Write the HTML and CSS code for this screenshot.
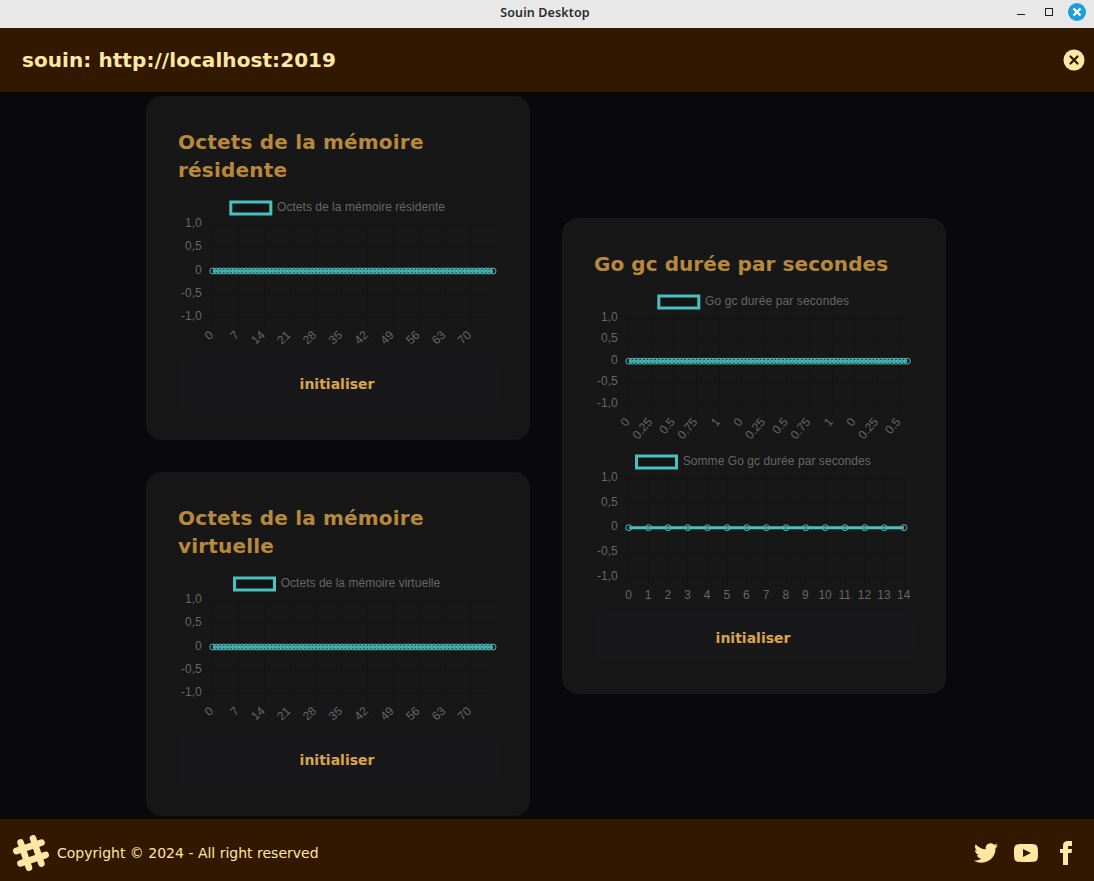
FILE: index.html
```html
<!DOCTYPE html>
<html lang="fr">
<head>
<meta charset="utf-8">
<title>Souin Desktop</title>
<link rel="stylesheet" href="styles.css">
</head>
<body>
<div class="window">
  <div class="titlebar">
    <span class="titlebar-text">Souin Desktop</span>
    <div class="controls">
      <svg width="80" height="28" viewBox="0 0 80 28">
        <path d="M3 14.5h8" stroke="#222" fill="none"/>
        <rect x="31.5" y="8.500" width="7" height="7" stroke="#222" fill="none"/>
        <circle cx="63" cy="12" r="9" fill="#1f9ede"/>
        <path d="M59.500 8.500l7 7m0-7l-7 7" stroke="#fff" stroke-width="2.300"/>
      </svg>
    </div>
  </div>
  <header class="header">
    <h1 class="header-title">souin: http://localhost:2019</h1>
    <svg class="close" width="22" height="22" viewBox="0 0 22 22">
      <circle cx="11" cy="11" r="10.500" fill="#ffe7a3"/>
      <path d="M7.500 7.500l7 7m0-7l-7 7" stroke="#331800" stroke-width="2.300" stroke-linecap="round"/>
    </svg>
  </header>
  <main class="main">
    <div class="column">
      <section class="card">
        <h2 class="card-title card-title-wide">Octets de la mémoire résidente</h2>
        <svg class="chart" data-chart="resident"></svg>
        <button class="button">initialiser</button>
      </section>
      <section class="card">
        <h2 class="card-title card-title-wide">Octets de la mémoire virtuelle</h2>
        <svg class="chart" data-chart="virtual"></svg>
        <button class="button">initialiser</button>
      </section>
    </div>
    <section class="card">
      <h2 class="card-title">Go gc durée par secondes</h2>
      <div class="charts">
        <svg class="chart" data-chart="gc"></svg>
        <svg class="chart" data-chart="sum"></svg>
      </div>
      <button class="button">initialiser</button>
    </section>
  </main>
  <footer class="footer">
    <div class="copyright">
      <svg width="36" height="36" viewBox="0 0 36 36">
        <g stroke="#ffe7a3" stroke-width="6.600" stroke-linecap="round" fill="none">
          <path d="M3.300 16L28.500 7.600M7.500 28.400L32.700 20M7.600 7.500L16 32.700M20 3.300L28.400 28.500"/>
        </g>
      </svg>
      <span>Copyright © 2024 - All right reserved</span>
    </div>
    <div class="socials">
      <svg width="24" height="24" viewBox="0 0 24 24"><path d="M24 4.557c-.883.392-1.832.656-2.828.775 1.017-.609 1.798-1.574 2.165-2.724-.951.564-2.005.974-3.127 1.195-.897-.957-2.178-1.555-3.594-1.555-3.179 0-5.515 2.966-4.797 6.045-4.091-.205-7.719-2.165-10.148-5.144-1.290 2.213-.669 5.108 1.523 6.574-.806-.026-1.566-.247-2.229-.616-.054 2.281 1.581 4.415 3.949 4.890-.693.188-1.452.232-2.224.084.626 1.956 2.444 3.379 4.600 3.419-2.070 1.623-4.678 2.348-7.290 2.040 2.179 1.397 4.768 2.212 7.548 2.212 9.142 0 14.307-7.721 13.995-14.646.962-.695 1.797-1.562 2.457-2.549z"/></svg>
      <svg width="24" height="24" viewBox="0 0 24 24"><path d="M19.615 3.184c-3.604-.246-11.631-.245-15.230 0-3.897.266-4.356 2.620-4.385 8.816.029 6.185.484 8.549 4.385 8.816 3.600.245 11.626.246 15.230 0 3.897-.266 4.356-2.620 4.385-8.816-.029-6.185-.484-8.549-4.385-8.816zm-10.615 12.816v-8l8 3.993-8 4.007z"/></svg>
      <svg width="24" height="24" viewBox="0 0 24 24"><path d="M9 8h-3v4h3v12h5v-12h3.642l.358-4h-4v-1.667c0-.955.192-1.333 1.115-1.333h2.885v-5h-3.808c-3.596 0-5.192 1.583-5.192 4.615v3.385z"/></svg>
    </div>
  </footer>
</div>
<script src="charts.js"></script>
</body>
</html>
```
FILE: styles.css
```css
* { box-sizing: border-box; }
body {
  margin: 0;
  background: #09090b;
  font-family: "DejaVu Sans", sans-serif;
}
.window {
  width: 1094px;
  height: 881px;
  display: flex;
  flex-direction: column;
  overflow: hidden;
}
.titlebar {
  height: 28px;
  flex: none;
  display: grid;
  grid-template-columns: 80px 1fr 80px;
  background: #e8e8e8;
}
.titlebar-text {
  grid-column: 2;
  text-align: center;
  padding-right: 4px;
  color: #2c2c2c;
  font: 600 12.5px/25px "Noto Sans", sans-serif;
  letter-spacing: 0.12px;
}
.controls svg { display: block; }
.header {
  height: 64px;
  flex: none;
  display: flex;
  align-items: center;
  justify-content: space-between;
  padding: 0 9px 0 22px;
  background: #331800;
}
.header-title {
  margin: 0;
  color: #ffe7a3;
  font-size: 20px;
  line-height: 28px;
  letter-spacing: 0.07px;
}
.main {
  flex: 1;
  min-height: 0;
  display: flex;
  justify-content: center;
  align-items: center;
  gap: 32px;
  padding: 1px 2px 0 0;
}
.column {
  display: flex;
  flex-direction: column;
  gap: 32px;
}
.card {
  width: 384px;
  padding: 32px;
  display: flex;
  flex-direction: column;
  gap: 8px;
  border-radius: 16px;
  background: #171717;
}
.card-title {
  margin: 0;
  color: #b8883d;
  font-size: 20px;
  line-height: 28px;
  letter-spacing: 0.07px;
}
.card-title-wide { letter-spacing: 0.19px; }
.charts { display: flex; flex-direction: column; }
.chart {
  display: block;
  width: 320px;
  height: 160px;
  font: 12px "Liberation Sans", Arial, sans-serif;
}
.chart text { fill: #666; }
.grid { stroke: rgba(0, 0, 0, 0.1); fill: none; }
.legend { fill: rgba(0, 0, 0, 0.1); stroke: #4bc0c0; stroke-width: 3; }
.line { stroke: #4bc0c0; stroke-width: 3; fill: none; }
.point { fill: rgba(0, 0, 0, 0.1); stroke: #4bc0c0; stroke-width: 1; }
.button {
  height: 48px;
  padding: 0 2px 0 0;
  border: 0;
  border-radius: 8px;
  background: #18181b;
  color: #dca54c;
  font: bold 14px/14px "DejaVu Sans", sans-serif;
}
.footer {
  height: 62px;
  flex: none;
  display: flex;
  justify-content: space-between;
  align-items: center;
  padding: 6px 16px 0 13px;
  background: #331800;
  color: #ffe7a3;
  font-size: 14px;
}
.copyright { display: flex; align-items: center; gap: 8px; }
.socials { display: flex; gap: 16px; fill: #ffe7a3; }
```
FILE: charts.js
```
const memoryLabels = ["0", "7", "14", "21", "28", "35", "42", "49", "56", "63", "70"];
const memory = { end: 315, count: 77, mid: 79, bottom: 126, every: 7, angle: -43, labels: memoryLabels };
const charts = {
  resident: { ...memory, legend: "Octets de la mémoire résidente", box: 52.8, legendWidth: 168 },
  virtual: { ...memory, legend: "Octets de la mémoire virtuelle", box: 56.5, legendWidth: 159.5 },
  gc: {
    legend: "Go gc durée par secondes", box: 64.8, legendWidth: 144, end: 313.3, count: 75, mid: 75.2, bottom: 118.5, every: 6, angle: -50,
    labels: ["0", "0.25", "0.5", "0.75", "1", "0", "0.25", "0.5", "0.75", "1", "0", "0.25", "0.5"]
  },
  sum: {
    legend: "Somme Go gc durée par secondes", box: 42.5, legendWidth: 188, end: 310, count: 15, mid: 81.7, bottom: 131.5, every: 1, angle: 0,
    labels: Array.from({ length: 15 }, (_, i) => String(i))
  }
};
const START = 34.8;
const TOP = 32.5;

function draw(c) {
  const step = (c.end - START) / (c.count - 1);
  let out = `<rect class="legend" x="${c.box}" y="10" width="40" height="12"/>`;
  out += `<text x="${c.box + 46.2}" y="19" textLength="${c.legendWidth}">${c.legend}</text>`;
  ["1,0", "0,5", "0", "-0,5", "-1,0"].forEach((label, i) => {
    const y = Math.floor(TOP + (c.bottom - TOP) * i / 4 - 0.2) + 0.5;
    out += `<path class="grid" d="M26.5 ${y}H${c.end}"/>`;
    out += `<text x="23.800" y="${y + 2.5}" text-anchor="end">${label}</text>`;
  });
  c.labels.forEach((label, i) => {
    const x = START + i * c.every * step;
    const gx = Math.round(x - 0.5) + 0.5;
    out += `<path class="grid" d="M${gx} ${TOP}V${c.bottom + 8}"/>`;
    out += c.angle
      ? `<text text-anchor="end" transform="translate(${x - 1.5} ${c.bottom + 15}) rotate(${c.angle})" y="4">${label}</text>`
      : `<text text-anchor="middle" x="${x - 0.3}" y="153">${label}</text>`;
  });
  out += `<path class="line" d="M${START} ${c.mid}H${c.end}"/>`;
  for (let i = 0; i < c.count; i++) {
    out += `<circle class="point" cx="${START + i * step}" cy="${c.mid}" r="3"/>`;
  }
  return out;
}

document.querySelectorAll("[data-chart]").forEach((svg) => {
  svg.innerHTML = draw(charts[svg.dataset.chart]);
});
```
